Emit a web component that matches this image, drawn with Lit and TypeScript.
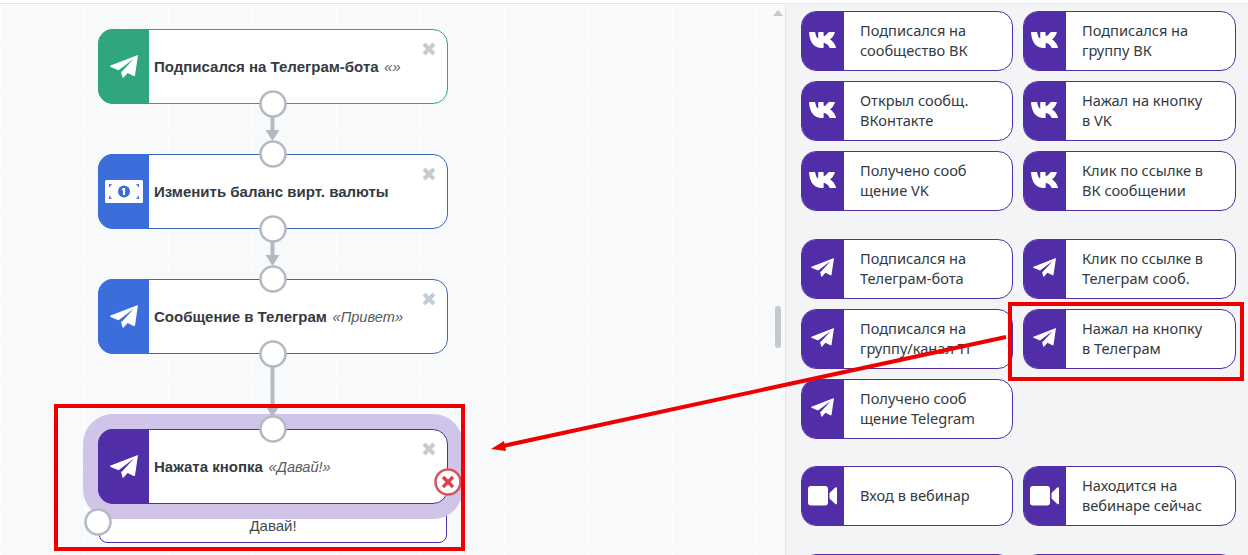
import { LitElement, html, svg, css } from "lit";
import { customElement } from "lit/decorators.js";

const plane = (cls: string) => html`<svg class=${cls} viewBox="0 0 28 23" aria-hidden="true">
  <path fill="#fff" d="M28 0 0.6 10.600c-.7.300-.7 1 0 1.300L8.600 15.200 24 3.600 12 16.600l-1 .2 1.400 5.300c.1.700.7.800 1.200.3l4-4.400 6.100 3c.6.300 1.200 0 1.300-.6Z"/>
</svg>`;

const vk = html`<svg class="vk" viewBox="0 0 27 16" aria-hidden="true">
  <path fill="#fff" stroke="#fff" stroke-width="1.300" stroke-linejoin="round" d="M.7.700H5.600C6 4 7.600 7 9.900 8V.7H14V5.700C16 5.200 18.400 3 20 .7H25.200C24.200 3.700 21.800 6.200 19.800 7.600 22 8.600 25 11.200 26.300 15.300H21C20 12.700 17.300 10.500 14 10.200V15.300H12.800C5.600 15.300 1.400 9.800.7.700Z"/>
</svg>`;

const video = html`<svg class="video" viewBox="0 0 29 20" aria-hidden="true">
  <rect fill="#fff" x="0" y="0" width="20" height="19.500" rx="3"/>
  <path fill="#fff" d="M21.500 7 27.300 1.500C28 1 29 1.300 29 2.300V17.200C29 18.200 28 18.500 27.300 18L21.500 12.500Z"/>
</svg>`;

const money = html`<svg class="money" viewBox="0 0 38 23" aria-hidden="true">
  <rect width="38" height="23" rx="1.500" fill="#fff"/>
  <circle cx="19" cy="11.500" r="6" fill="#3b6ddb"/>
  <path d="M18 8h2.100v7h-2.100v-5l-1.100.4v-1.300Z" fill="#fff"/>
  <path d="M4 4h2.500v1.300H5.300V7H4ZM34 4h-2.500v1.300h1.200V7H34ZM4 19h2.500v-1.300H5.300V16H4ZM34 19h-2.500v-1.300h1.200V16H34Z" fill="#3b6ddb"/>
</svg>`;

const closeX = html`<svg class="close" viewBox="0 0 14 14" aria-hidden="true">
  <path d="M2 2 12 12M12 2 2 12" stroke="#c4cdd5" stroke-width="4" fill="none"/>
</svg>`;

interface Tile { icon: "vk" | "tg" | "video" | "none"; a: string; b?: string }

const sections: Tile[][] = [
  [
    { icon: "vk", a: "Подписался на", b: "сообщество ВК" },
    { icon: "vk", a: "Подписался на", b: "группу ВК" },
    { icon: "vk", a: "Открыл сообщ.", b: "ВКонтакте" },
    { icon: "vk", a: "Нажал на кнопку", b: "в VK" },
    { icon: "vk", a: "Получено сооб", b: "щение VK" },
    { icon: "vk", a: "Клик по ссылке в", b: "ВК сообщении" },
  ],
  [
    { icon: "tg", a: "Подписался на", b: "Телеграм-бота" },
    { icon: "tg", a: "Клик по ссылке в", b: "Телеграм сооб." },
    { icon: "tg", a: "Подписался на", b: "группу/канал ТГ" },
    { icon: "tg", a: "Нажал на кнопку", b: "в Телеграм" },
    { icon: "tg", a: "Получено сооб", b: "щение Telegram" },
  ],
  [
    { icon: "video", a: "Вход в вебинар" },
    { icon: "video", a: "Находится на", b: "вебинаре сейчас" },
  ],
  [
    { icon: "none", a: "" },
    { icon: "none", a: "" },
  ],
];

interface Node { top: number; color: string; title: string; note?: string; icon: "tg" | "money" }

const nodes: Node[] = [
  { top: 29, color: "green", title: "Подписался на Телеграм-бота", note: "«»", icon: "tg" },
  { top: 154, color: "blue", title: "Изменить баланс вирт. валюты", icon: "money" },
  { top: 279, color: "blue", title: "Сообщение в Телеграм", note: "«Привет»", icon: "tg" },
  { top: 429, color: "purple", title: "Нажата кнопка", note: "«Давай!»", icon: "tg" },
];

const dots: [number, number][] = [
  [273, 104], [273, 154], [273, 229], [273, 279], [273, 354], [273, 429], [98, 522],
];

@customElement("app-root")
export class AppRoot extends LitElement {
  static styles = css`
    :host { display: block; width: 1248px; height: 555px; overflow: hidden; position: relative; background: #fff; }
    .page { display: flex; margin-top: 3px; border-top: 1px solid #e3e5e8; box-sizing: border-box; height: 552px; }
    .canvas {
      position: relative; width: 785px; flex: none; overflow: hidden;
      background-color: #f8f9fb;
      background-image:
        linear-gradient(#fcfdfe 1px, transparent 1px),
        linear-gradient(90deg, #fcfdfe 1px, transparent 1px);
      background-size: 42px 42px;
    }
    .side {
      flex: 1; background: #f3f4f6; border-left: 1px solid #e3e5e8;
      padding: 7px 0 0 15px; display: flex; flex-direction: column; gap: 27.500px; overflow: hidden;
    }
    .section { display: grid; grid-template-columns: 212px 213px; gap: 10px 10px; flex: none; }
    .tile {
      display: flex; height: 60px; box-sizing: border-box; background: #fff;
      border: 1px solid #512da8; border-radius: 15px; overflow: hidden;
      font: 14.600px/20px "Noto Sans", sans-serif; color: #333a42;
    }
    .tile-icon {
      width: 43px; flex: none; margin: -1px 0 -1px -1px; background: #512da8;
      display: flex; align-items: center; justify-content: center;
    }
    .tile-text { padding-left: 16px; margin-top: -2px; align-self: center; white-space: nowrap; }
    .tile-text div { height: 20px; }
    .vk { width: 27px; height: 16px; margin-top: -2px; }
    .tp { width: 23px; height: 19px; margin-top: -3px; }
    .video { width: 29px; height: 20px; }

    .node {
      position: absolute; left: 98px; width: 350px; height: 75px; box-sizing: border-box;
      display: flex; background: #fff; border: 1px solid; border-radius: 15px;
      font: 15px/18px "Liberation Sans", Arial, sans-serif; color: #343a43;
    }
    .node.green { border-color: #2fa67e; }
    .node.blue { border-color: #3f66b8; }
    .node.purple { border-color: #512da8; }
    .node-icon {
      width: 51px; flex: none; margin: -1px 0 -1px -1px; border-radius: 15px 0 0 15px;
      display: flex; align-items: center; justify-content: center;
    }
    .green .node-icon { background: #2fa67e; }
    .blue .node-icon { background: #3b6ddb; }
    .purple .node-icon { background: #512da8; }
    .np { width: 28px; height: 23px; margin-top: -1px; }
    .money { width: 38px; height: 23px; margin-top: -1px; }
    .node-text { padding-left: 5px; align-self: center; white-space: nowrap; }
    .node-text b { font-weight: 700; }
    .node-text i { font-size: 14.600px; font-style: italic; color: #555b63; margin-left: 1.500px; }
    .close { position: absolute; right: 11px; top: 12px; width: 14px; height: 14px; }

    .halo { position: absolute; left: 83px; top: 410px; width: 380px; height: 105px; border-radius: 30px; background: #d0c5e8; z-index: 1; }
    .answer {
      position: absolute; left: 99px; top: 486px; width: 348px; height: 53px; box-sizing: border-box;
      background: #fff; border: 1px solid #512da8; border-radius: 0 0 8px 8px; z-index: 0;
      display: flex; align-items: flex-end; justify-content: center; padding-bottom: 7px;
      font: 15px/18px "Liberation Sans", Arial, sans-serif; color: #444a52;
    }
    .node { z-index: 2; }
    .wires { position: absolute; left: 0; top: 0; z-index: 3; }
    .overlay { position: absolute; left: 0; top: 0; z-index: 5; pointer-events: none; }
    .scroll-up { position: absolute; left: 773px; top: 6px; width: 0; height: 0; border: 5px solid transparent; border-top: 0; border-bottom: 6px solid #c7cbd0; z-index: 2; }
    .scroll-thumb { position: absolute; left: 775px; top: 302px; width: 6px; height: 42px; border-radius: 3px; background: #c5c9cf; z-index: 2; }
  `;

  private tileIcon(t: Tile) {
    if (t.icon === "vk") return vk;
    if (t.icon === "tg") return plane("tp");
    if (t.icon === "video") return video;
    return "";
  }

  render() {
    return html`
      <div class="page">
        <div class="canvas">
          <div class="answer">Давай!</div>
          <div class="halo"></div>
          ${nodes.map(
            (n) => html`<div class="node ${n.color}" style="top:${n.top - 4}px">
              <div class="node-icon">${n.icon === "tg" ? plane("np") : money}</div>
              <div class="node-text"><b>${n.title}</b>${n.note ? html` <i>${n.note}</i>` : ""}</div>
              ${closeX}
            </div>`
          )}
          <svg class="wires" width="785" height="551" viewBox="0 4 785 551" aria-hidden="true">
            ${[[117, 141], [242, 266], [367, 417]].map(
              ([a, b]) => svg`<path d="M272.500 ${a}V${b - 3}" stroke="#b3bac2" stroke-width="4" fill="none"/>
                <path d="M265.500 ${b - 11}h14l-7 ${11}Z" fill="#b3bac2"/>`
            )}
            ${dots.map(
              ([x, y]) => svg`<circle cx=${x} cy=${y} r="12.500" fill="#fff" stroke="#b3bac2" stroke-width="2.600"/>`
            )}
            <circle cx="448" cy="482" r="12.500" fill="#fff" stroke="#d9545c" stroke-width="2.600"/>
            <path d="M443 477 453 487M453 477 443 487" stroke="#dc3f4c" stroke-width="3.400"/>
          </svg>
          <div class="scroll-up"></div>
          <div class="scroll-thumb"></div>
        </div>
        <div class="side">
          ${sections.map(
            (s) => html`<div class="section">
              ${s.map(
                (t) => html`<div class="tile">
                  <div class="tile-icon">${this.tileIcon(t)}</div>
                  <div class="tile-text"><div>${t.a}</div>${t.b ? html`<div>${t.b}</div>` : ""}</div>
                </div>`
              )}
            </div>`
          )}
        </div>
      </div>
      <svg class="overlay" width="1248" height="555" aria-hidden="true">
        <rect x="56" y="406" width="407" height="143" fill="none" stroke="#ee0000" stroke-width="4"/>
        <rect x="1010" y="304" width="232" height="75" fill="none" stroke="#ee0000" stroke-width="4"/>
        <path d="M1006 337 503 446" stroke="#ee0000" stroke-width="4" fill="none"/>
        <path d="M491 449 504 441 506 451Z" fill="#ee0000"/>
      </svg>
    `;
  }
}
